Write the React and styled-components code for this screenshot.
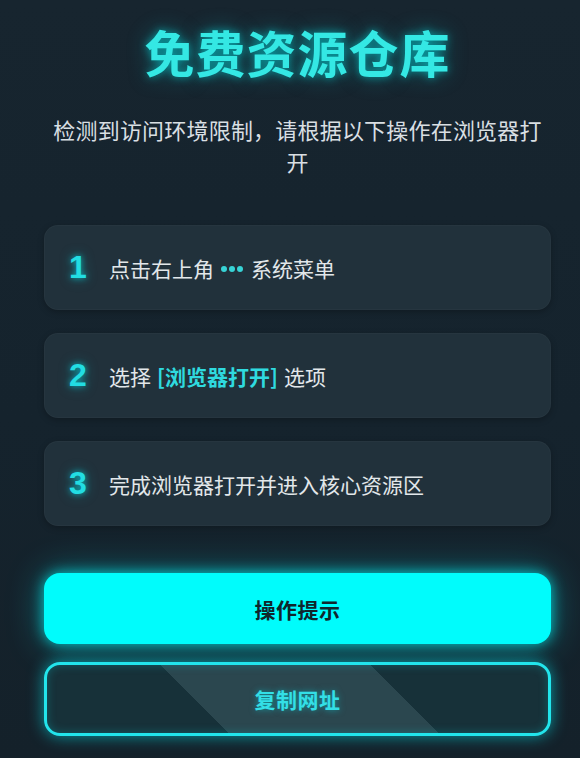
import styled, { createGlobalStyle } from 'styled-components';

const GlobalStyle = createGlobalStyle`
  html, body {
    margin: 0;
    padding: 0;
    background: #15232d;
  }
  body {
    font-family: "Noto Sans CJK SC", "Noto Sans", "Liberation Sans", sans-serif;
    -webkit-font-smoothing: antialiased;
  }
`;

const Page = styled.main`
  min-height: 758px;
  box-sizing: border-box;
  padding: 22px 29px 0 44px;
  display: flex;
  flex-direction: column;
  background: linear-gradient(180deg, #17252f 0%, #15232d 55%, #14212a 100%);
`;

const Title = styled.h1`
  margin: 0;
  font-size: 50px;
  line-height: 58px;
  font-weight: 700;
  text-align: center;
  letter-spacing: 1px;
  color: #34e8e4;
  text-shadow: 0 0 8px rgba(0, 240, 240, 0.55), 0 0 22px rgba(0, 220, 230, 0.35);
`;

const Subtitle = styled.p`
  margin: 33px 0 0;
  padding: 0 6px;
  font-size: 22px;
  line-height: 32px;
  text-align: center;
  color: #d9dfe3;
  letter-spacing: 0.2px;
`;

const Steps = styled.ol`
  list-style: none;
  margin: 48px 0 0;
  padding: 0;
  display: flex;
  flex-direction: column;
  gap: 23px;
`;

const Step = styled.li`
  height: 85px;
  box-sizing: border-box;
  padding: 0 24px;
  display: flex;
  align-items: center;
  border-radius: 14px;
  background: #21313b;
  border: 1px solid rgba(255, 255, 255, 0.025);
  box-shadow: 0 2px 6px rgba(0, 0, 0, 0.25);
`;

const StepNum = styled.span`
  width: 40px;
  flex: none;
  font-family: "Liberation Sans", "Noto Sans", sans-serif;
  font-size: 32px;
  font-weight: 700;
  color: #22dde2;
  text-shadow: 0 0 6px rgba(0, 230, 240, 0.7), 0 0 14px rgba(0, 220, 230, 0.35);
`;

const StepText = styled.span`
  font-size: 21px;
  line-height: 30px;
  color: #e2e7ea;
`;

const Accent = styled.span`
  color: #2fdadf;
  font-weight: 700;
  margin: 0 ${(p) => p.$space || 0}px;
`;

const Dots = styled.span`
  display: inline-flex;
  gap: 2px;
  margin: 0 8px 0 7px;
  vertical-align: middle;
  position: relative;
  top: -2px;
  & i {
    width: 6px;
    height: 6px;
    border-radius: 50%;
    background: #37d3d6;
  }
`;

const Actions = styled.div`
  margin-top: 47px;
  display: flex;
  flex-direction: column;
  gap: 18px;
`;

const Button = styled.button`
  width: 100%;
  box-sizing: border-box;
  font-family: inherit;
  font-size: 21px;
  font-weight: 700;
  letter-spacing: 0.5px;
  cursor: pointer;
  display: flex;
  align-items: center;
  justify-content: center;
`;

const PrimaryButton = styled(Button)`
  height: 71px;
  border: none;
  border-radius: 16px;
  background: #00fcfc;
  color: #10262c;
  box-shadow: 0 0 14px rgba(0, 255, 255, 0.7), 0 0 36px rgba(0, 230, 240, 0.4);
`;

const OutlineButton = styled(Button)`
  height: 74px;
  border: 3px solid #22e5ec;
  border-radius: 16px;
  color: #33dfe6;
  text-shadow: 0 0 6px rgba(0, 230, 240, 0.5);
  background: linear-gradient(
    45deg,
    #173139 0px,
    #173139 128px,
    #2b474f 128px,
    #2b474f 277px,
    #173139 277px
  );
  box-shadow: 0 0 16px rgba(0, 235, 245, 0.6), inset 0 0 10px rgba(0, 230, 240, 0.25);
`;

export default function App() {
  return (
    <>
      <GlobalStyle />
      <Page>
        <Title>免费资源仓库</Title>
        <Subtitle>检测到访问环境限制，请根据以下操作在浏览器打开</Subtitle>
        <Steps>
          <Step>
            <StepNum>1</StepNum>
            <StepText>
              点击右上角
              <Dots aria-label="更多">
                <i />
                <i />
                <i />
              </Dots>
              系统菜单
            </StepText>
          </Step>
          <Step>
            <StepNum>2</StepNum>
            <StepText>
              选择<Accent $space={6}>[浏览器打开]</Accent>选项
            </StepText>
          </Step>
          <Step>
            <StepNum>3</StepNum>
            <StepText>完成浏览器打开并进入核心资源区</StepText>
          </Step>
        </Steps>
        <Actions>
          <PrimaryButton>操作提示</PrimaryButton>
          <OutlineButton>复制网址</OutlineButton>
        </Actions>
      </Page>
    </>
  );
}
